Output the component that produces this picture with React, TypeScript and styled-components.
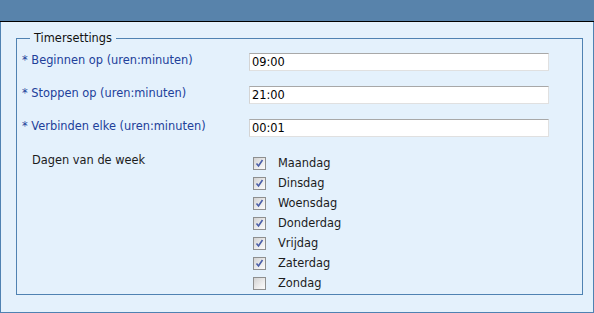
import React from "react";
import styled, { createGlobalStyle } from "styled-components";

const Global = createGlobalStyle`
  html, body { margin: 0; padding: 0; background: #ffffff; }
  body { font-family: "DejaVu Sans", Verdana, sans-serif; font-size: 11.4px; }
`;

const Page = styled.div`
  width: 594px;
  height: 313px;
  display: flex;
  flex-direction: column;
`;

const Header = styled.div`
  height: 21px;
  background: #5883ab;
  border-bottom: 1px solid #000000;
`;

const Panel = styled.div`
  flex: 1;
  background: #e4f1fc;
  border: 1px solid #4f82b2;
  border-top: none;
  padding: 10px 10px 17px 15px;
  display: flex;
`;

const Fieldset = styled.fieldset`
  flex: 1;
  margin: 0;
  border: 1px solid #4f82b2;
  padding: 8px 5px 0 5px;
  min-width: 0;
`;

const Legend = styled.legend`
  margin-left: 8px;
  padding: 0 4px;
  color: #111111;
  font-size: 11.4px;
  line-height: 13px;
`;

const Form = styled.div`
  display: grid;
  grid-template-columns: 227px 300px;
  row-gap: 15px;
  align-items: start;
`;

const Label = styled.div<{ $plain?: boolean }>`
  color: ${(p) => (p.$plain ? "#1c1c1c" : "#21409a")};
  line-height: 13px;
  padding-top: ${(p) => (p.$plain ? "2px" : "1px")};
  padding-left: ${(p) => (p.$plain ? "10px" : "0")};
  white-space: nowrap;
`;

const Input = styled.input`
  box-sizing: border-box;
  width: 300px;
  height: 18px;
  margin: 0;
  padding: 0 2px;
  background: #ffffff;
  border: 1px solid #e0e0e0;
  border-top-color: #a8a8a8;
  border-left-color: #d4d4d4;
  font-family: "DejaVu Sans", Verdana, sans-serif;
  font-size: 11.4px;
  color: #000000;
  outline: none;
`;

const Days = styled.div`
  display: flex;
  flex-direction: column;
  padding-top: 1px;
`;

const DayRow = styled.div`
  height: 20px;
  display: flex;
  align-items: center;
  padding-left: 4px;
  color: #1c1c1c;
`;

const Box = styled.span`
  box-sizing: border-box;
  width: 13px;
  height: 13px;
  border: 1px solid #8e8f8f;
  background: linear-gradient(135deg, #d2d2d2 0%, #ededed 60%, #fbfbfb 100%);
  display: flex;
  align-items: center;
  justify-content: center;
  margin-right: 12px;
`;

const days: [string, boolean][] = [
  ["Maandag", true],
  ["Dinsdag", true],
  ["Woensdag", true],
  ["Donderdag", true],
  ["Vrijdag", true],
  ["Zaterdag", true],
  ["Zondag", false],
];

const Check = () => (
  <svg width="9" height="9" viewBox="0 0 9 9">
    <path d="M1.5 4.5 L3.5 7 L7.5 1" fill="none" stroke="#4b5fa8" strokeWidth="1.6" />
  </svg>
);

export default function App() {
  return (
    <Page>
      <Global />
      <Header />
      <Panel>
        <Fieldset>
          <Legend>Timersettings</Legend>
          <Form>
            <Label>* Beginnen op (uren:minuten)</Label>
            <Input defaultValue="09:00" />
            <Label>* Stoppen op (uren:minuten)</Label>
            <Input defaultValue="21:00" />
            <Label>* Verbinden elke (uren:minuten)</Label>
            <Input defaultValue="00:01" />
            <Label $plain>Dagen van de week</Label>
            <Days>
              {days.map(([d, c]) => (
                <DayRow key={d}>
                  <Box>{c && <Check />}</Box>
                  {d}
                </DayRow>
              ))}
            </Days>
          </Form>
        </Fieldset>
      </Panel>
    </Page>
  );
}
